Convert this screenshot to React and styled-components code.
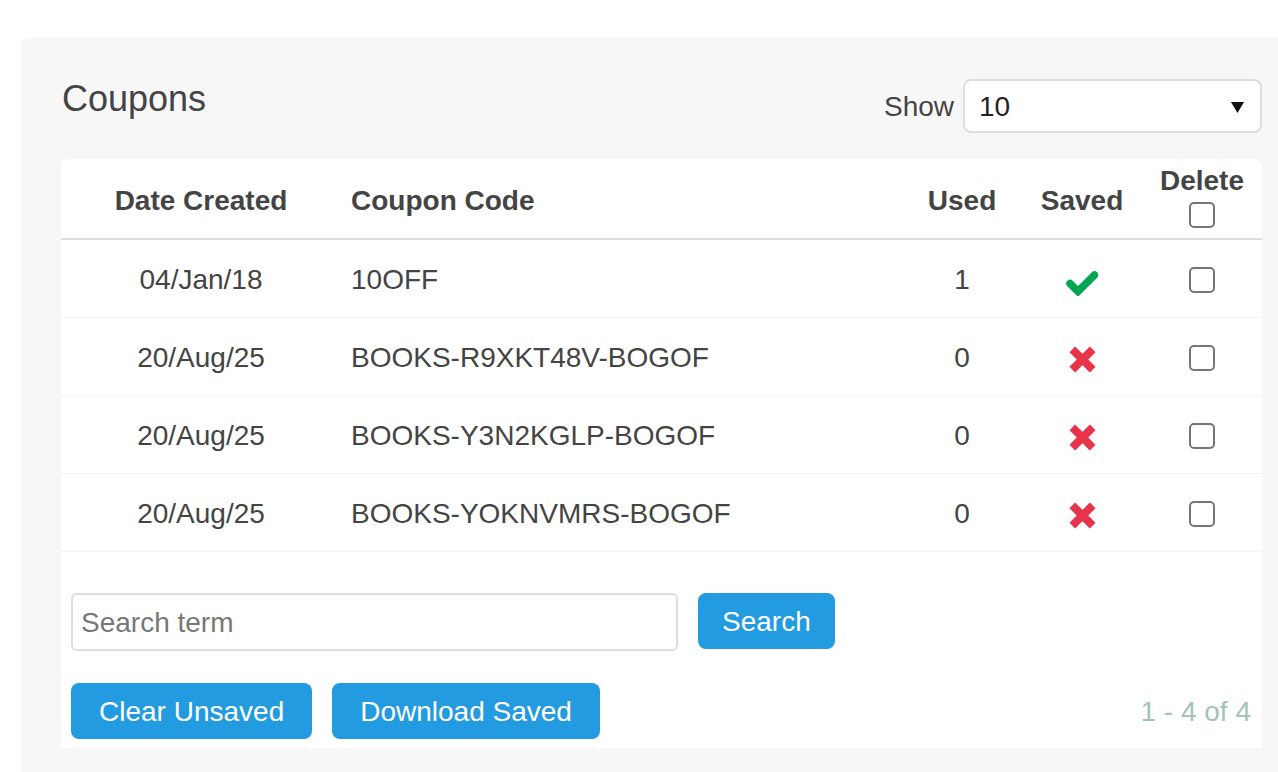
import React from "react";
import styled, { createGlobalStyle } from "styled-components";

const Global = createGlobalStyle`
  html, body { margin: 0; padding: 0; background: #ffffff; overflow: hidden; }
  body { font-family: "Liberation Sans", Arial, Helvetica, sans-serif; color: #444444; }
  * { box-sizing: border-box; }
`;

const Panel = styled.section`
  margin: 38px 0 0 21px;
  padding: 41px 16px 40px 40px;
  background: #f7f7f7;
  border-top-left-radius: 8px;
  min-height: 740px;
`;

const Header = styled.div`
  display: flex;
  align-items: flex-start;
  justify-content: space-between;
  height: 54px;
  margin-bottom: 26px;
`;

const Title = styled.h1`
  margin: -1px 0 0 1px;
  font-size: 36px;
  font-weight: 400;
  line-height: 41px;
  color: #444444;
`;

const ShowGroup = styled.div`
  display: flex;
  align-items: center;
  gap: 9px;
  height: 54px;
`;

const ShowLabel = styled.span`
  font-size: 28px;
  color: #444444;
  padding-top: 2px;
`;

const SelectBox = styled.div`
  width: 299px;
  height: 54px;
  display: flex;
  align-items: center;
  justify-content: space-between;
  padding: 2px 16px 0 14px;
  background: #ffffff;
  border: 2px solid #dedede;
  border-radius: 8px;
  font-size: 28px;
  color: #222222;
`;

const Card = styled.div`
  background: #ffffff;
  border-radius: 8px 8px 0 0;
`;

const Table = styled.table`
  width: 100%;
  border-collapse: collapse;
  table-layout: fixed;
`;

const Th = styled.th`
  height: 80px;
  padding: 4px 10px 0;
  font-size: 28px;
  font-weight: 700;
  color: #444444;
  text-align: ${(p) => p.$align || "center"};
  vertical-align: middle;
  border-bottom: 2px solid #dddddd;
`;

const Tr = styled.tr`
  border-bottom: 1px solid #f2f2f2;
`;

const Td = styled.td`
  height: 78px;
  padding: 4px 10px 0;
  font-size: 28px;
  color: #444444;
  text-align: ${(p) => p.$align || "center"};
  vertical-align: middle;
`;

const DeleteHead = styled.div`
  display: flex;
  flex-direction: column;
  align-items: center;
  gap: 7px;
  line-height: 28px;
  margin-top: -6px;
`;

const Check = styled.input.attrs({ type: "checkbox" })`
  appearance: none;
  -webkit-appearance: none;
  display: block;
  margin: 0 auto;
  width: 26px;
  height: 26px;
  border: 2px solid #767676;
  border-radius: 5px;
  background: #ffffff;
`;

const IconWrap = styled.span`
  display: inline-flex;
  justify-content: center;
  align-items: center;
  vertical-align: middle;
`;

const Footer = styled.div`
  padding: 41px 11px 9px 10px;
  display: flex;
  flex-direction: column;
  gap: 32px;
`;

const SearchRow = styled.div`
  display: flex;
  align-items: flex-start;
  gap: 20px;
`;

const SearchInput = styled.input`
  width: 607px;
  height: 58px;
  padding: 2px 8px 0;
  border: 2px solid #dddddd;
  border-radius: 6px;
  font-family: "Liberation Sans", Arial, sans-serif;
  font-size: 28px;
  color: #444444;
  outline: none;
  &::placeholder { color: #777777; }
`;

const Button = styled.button`
  height: 56px;
  padding: 2px ${(p) => p.$pad || 28}px 0;
  border: none;
  border-radius: 8px;
  background: #229be0;
  color: #ffffff;
  font-family: "Liberation Sans", Arial, sans-serif;
  font-size: 28px;
  line-height: 54px;
  cursor: pointer;
`;

const ActionRow = styled.div`
  display: flex;
  align-items: center;
  justify-content: space-between;
`;

const ButtonGroup = styled.div`
  display: flex;
  gap: 20px;
`;

const Paging = styled.span`
  font-size: 28px;
  color: #a3c2b8;
  padding: 2px 0 0;
`;

const CheckIcon = () => (
  <IconWrap>
    <svg width="32" height="28" viewBox="0 0 32 28">
      <polyline points="4,15.5 12,23.5 28.5,7" fill="none" stroke="#00a651" strokeWidth="7.5" strokeLinejoin="miter" strokeLinecap="round" />
    </svg>
  </IconWrap>
);

const CrossIcon = () => (
  <IconWrap>
    <svg width="27" height="27" viewBox="0 0 27 27">
      <g stroke="#e8334a" strokeWidth="8" strokeLinecap="butt">
        <line x1="3.3" y1="3.3" x2="23.7" y2="23.7" />
        <line x1="23.7" y1="3.3" x2="3.3" y2="23.7" />
      </g>
    </svg>
  </IconWrap>
);

const Caret = () => (
  <svg width="13" height="11" viewBox="0 0 13 11">
    <polygon points="0,0 13,0 6.5,11" fill="#111111" />
  </svg>
);

const rows = [
  { date: "04/Jan/18", code: "10OFF", used: 1, saved: true },
  { date: "20/Aug/25", code: "BOOKS-R9XKT48V-BOGOF", used: 0, saved: false },
  { date: "20/Aug/25", code: "BOOKS-Y3N2KGLP-BOGOF", used: 0, saved: false },
  { date: "20/Aug/25", code: "BOOKS-YOKNVMRS-BOGOF", used: 0, saved: false },
];

export default function App() {
  return (
    <>
      <Global />
      <Panel>
        <Header>
          <Title>Coupons</Title>
          <ShowGroup>
            <ShowLabel>Show</ShowLabel>
            <SelectBox>
              <span>10</span>
              <Caret />
            </SelectBox>
          </ShowGroup>
        </Header>
        <Card>
          <Table>
            <colgroup>
              <col style={{ width: 280 }} />
              <col />
              <col style={{ width: 120 }} />
              <col style={{ width: 120 }} />
              <col style={{ width: 120 }} />
            </colgroup>
            <thead>
              <tr>
                <Th>Date Created</Th>
                <Th $align="left">Coupon Code</Th>
                <Th>Used</Th>
                <Th>Saved</Th>
                <Th>
                  <DeleteHead>
                    <span>Delete</span>
                    <Check />
                  </DeleteHead>
                </Th>
              </tr>
            </thead>
            <tbody>
              {rows.map((r, i) => (
                <Tr key={i}>
                  <Td>{r.date}</Td>
                  <Td $align="left">{r.code}</Td>
                  <Td>{r.used}</Td>
                  <Td>{r.saved ? <CheckIcon /> : <CrossIcon />}</Td>
                  <Td>
                    <Check />
                  </Td>
                </Tr>
              ))}
            </tbody>
          </Table>
          <Footer>
            <SearchRow>
              <SearchInput placeholder="Search term" />
              <Button $pad={24}>Search</Button>
            </SearchRow>
            <ActionRow>
              <ButtonGroup>
                <Button>Clear Unsaved</Button>
                <Button>Download Saved</Button>
              </ButtonGroup>
              <Paging>1 - 4 of 4</Paging>
            </ActionRow>
          </Footer>
        </Card>
      </Panel>
    </>
  );
}
